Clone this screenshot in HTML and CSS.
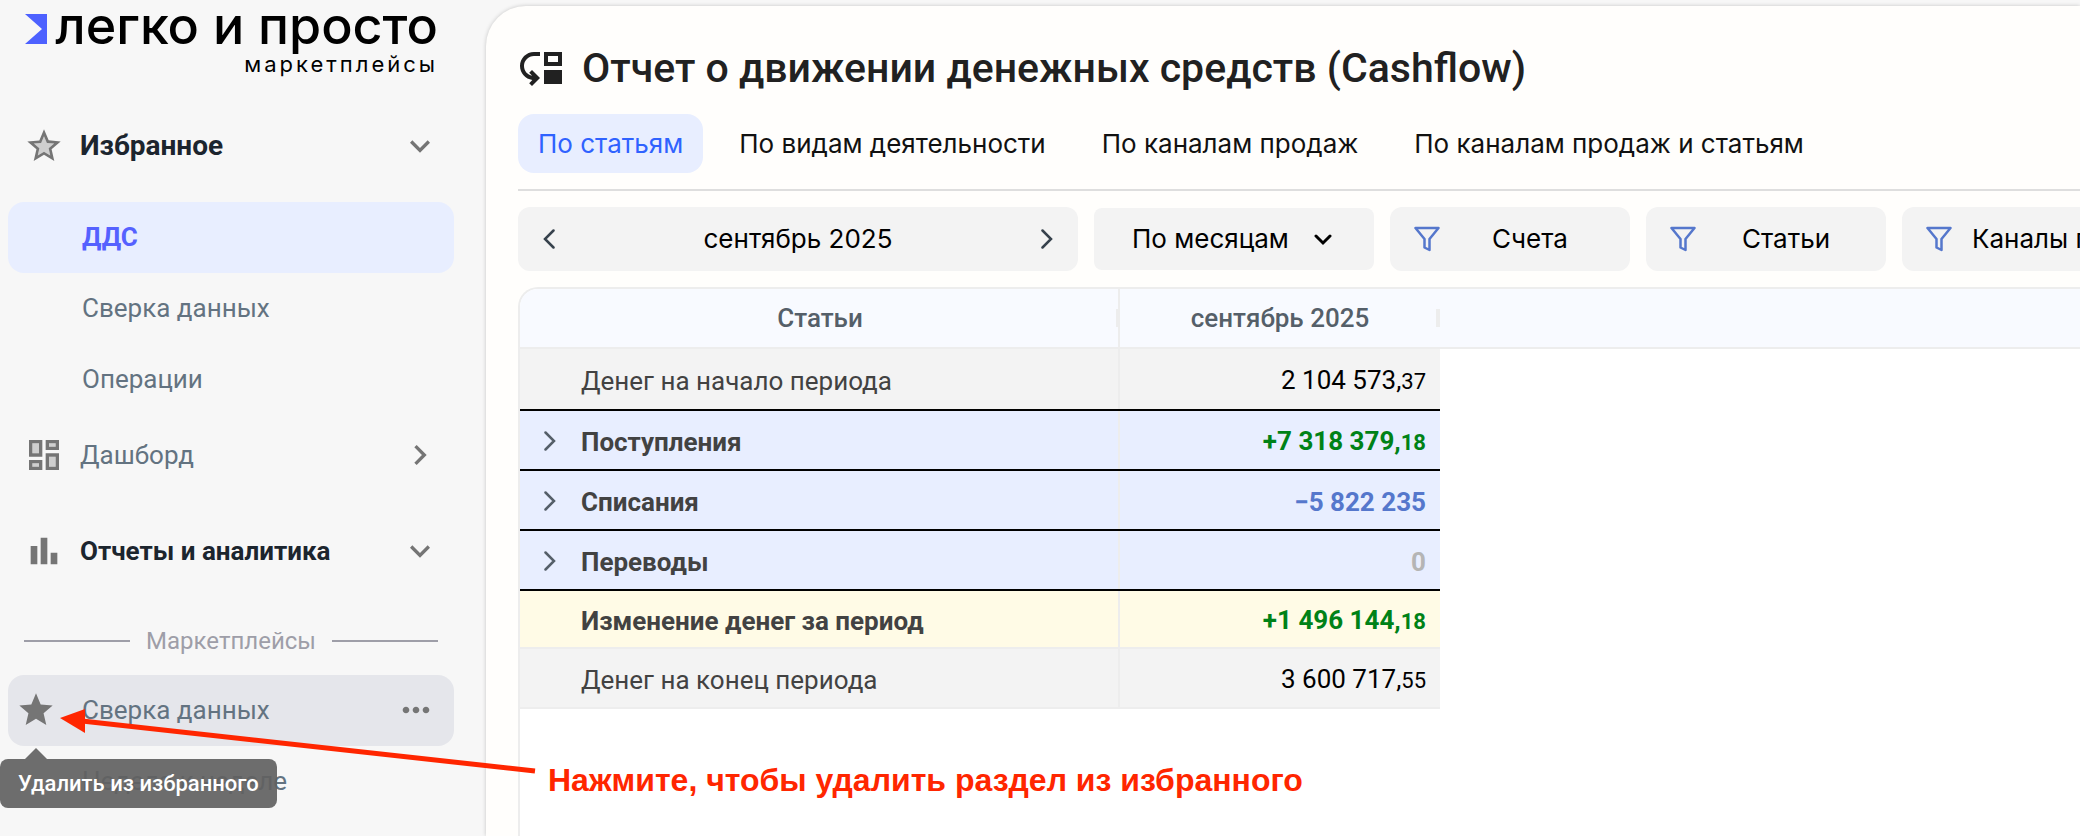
FILE: index.html
```html
<!DOCTYPE html>
<html lang="ru">
<head>
    <meta charset="UTF-8">
    <meta name="viewport" content="width=device-width, initial-scale=1.0">
    <title>Отчет о движении денежных средств (Cashflow)</title>
    <link rel="stylesheet" href="styles.css">
</head>
<body>
    <!-- иконки -->
    <svg class="sprite" aria-hidden="true">
        <symbol id="i-down" viewBox="0 0 24 24"><path d="M16.59 8.59 12 13.17 7.41 8.59 6 10l6 6 6-6z"/></symbol>
        <symbol id="i-right" viewBox="0 0 24 24"><path d="M10 6 8.59 7.41 13.17 12l-4.58 4.59L10 18l6-6z"/></symbol>
        <symbol id="i-star" viewBox="0 0 24 24"><path d="M12 17.27 18.18 21l-1.64-7.03L22 9.24l-7.19-.61L12 2 9.19 8.63 2 9.24l5.46 4.73L5.82 21z"/></symbol>
        <symbol id="i-thin" viewBox="0 0 12 20"><path d="M1.500 1.500l8.500 8.500-8.500 8.500" fill="none" stroke="currentColor" stroke-width="2.500" stroke-linecap="round"/></symbol>
        <symbol id="i-filter" viewBox="0 0 26 26"><path d="M1.500 2h23l-9 11v11l-5-2.500V13z" fill="none" stroke="currentColor" stroke-width="2.500" stroke-linejoin="round"/></symbol>
    </svg>

    <div class="layout">
        <aside class="sidebar">
            <a href="#" class="logo">
                <span class="logo-main">
                    <svg class="logo-mark" viewBox="0 0 22 30"><path d="M0 0h22v30H0l17-15z"/></svg>
                    <span class="logo-name">легко и просто</span>
                </span>
                <span class="logo-sub">маркетплейсы</span>
            </a>

            <nav class="nav">
                <button class="nav-group open favorites">
                    <svg class="icon" viewBox="0 0 24 24"><path opacity=".3" d="m12 15.400-3.760 2.270 1-4.280-3.320-2.880 4.380-.380L12 6.100l1.710 4.040 4.380.380-3.320 2.880 1 4.280z"/><path d="m22 9.240-7.190-.62L12 2 9.190 8.630 2 9.240l5.460 4.730L5.820 21 12 17.270 18.180 21l-1.630-7.030L22 9.240zM12 15.400l-3.760 2.270 1-4.280-3.320-2.880 4.380-.38L12 6.100l1.710 4.040 4.380.38-3.320 2.880 1 4.280L12 15.400z"/></svg>
                    <span>Избранное</span>
                    <svg class="icon"><use href="#i-down"/></svg>
                </button>
                <a href="#" class="nav-item active">ДДС</a>
                <a href="#" class="nav-item">Сверка данных</a>
                <a href="#" class="nav-item">Операции</a>

                <button class="nav-group">
                    <svg class="icon" viewBox="0 0 24 24"><path opacity=".3" d="M5 5h4v6H5zm10 8h4v6h-4zM5 17h4v2H5zM15 5h4v2h-4z"/><path d="M3 13h8V3H3v10zm2-8h4v6H5V5zm8 16h8V11h-8v10zm2-8h4v6h-4v-6zM13 3v6h8V3h-8zm6 4h-4V5h4v2zM3 21h8v-6H3v6zm2-4h4v2H5v-2z"/></svg>
                    <span>Дашборд</span>
                    <svg class="icon"><use href="#i-right"/></svg>
                </button>
                <button class="nav-group open">
                    <svg class="icon" viewBox="0 0 24 24"><path d="M4 9h4v11H4zm12 4h4v7h-4zm-6-9h4v16h-4z"/></svg>
                    <span>Отчеты и аналитика</span>
                    <svg class="icon"><use href="#i-down"/></svg>
                </button>

                <div class="nav-divider">Маркетплейсы</div>
                <div class="nav-item hover">
                    <button class="fav" aria-label="Удалить из избранного" aria-describedby="fav-tip">
                        <svg class="icon"><use href="#i-star"/></svg>
                    </button>
                    <a href="#">Сверка данных</a>
                    <button class="more" aria-label="Ещё">
                        <svg class="icon" viewBox="0 0 24 24"><path d="M6 10c-1.100 0-2 .9-2 2s.9 2 2 2 2-.9 2-2-.9-2-2-2zm12 0c-1.100 0-2 .9-2 2s.9 2 2 2 2-.9 2-2-.9-2-2-2zm-6 0c-1.100 0-2 .9-2 2s.9 2 2 2 2-.9 2-2-.9-2-2-2z"/></svg>
                    </button>
                    <span class="tooltip" id="fav-tip" role="tooltip">Удалить из избранного</span>
                    <!-- подсказка со стрелкой -->
                    <div class="hint">
                        <svg class="hint-arrow" viewBox="0 0 480 70"><path d="M22 12 475 62" stroke="#ff2600" stroke-width="5"/><path d="M0 9 25 0v24z" fill="#ff2600"/></svg>
                        <span>Нажмите, чтобы удалить раздел из избранного</span>
                    </div>
                </div>
                <a href="#" class="nav-item">Неделя к неделе</a>
            </nav>
        </aside>

        <main class="main">
            <h1 class="title">
                <svg viewBox="0 0 24 24"><path d="M3 11c0 2.450 1.760 4.470 4.080 4.910l-1.490-1.490L7 13l4 4.010L7 21l-1.410-1.410 1.580-1.580v-.06C3.700 17.540 1 14.580 1 11c0-3.870 3.130-7 7-7h3v2H8c-2.760 0-5 2.240-5 5zM22 11V4h-9v7h9zm-2-2h-5V6h5v3zM13 13h9v7h-9z"/></svg>
                Отчет о движении денежных средств (Cashflow)
            </h1>

            <div class="tabs">
                <button class="tab active">По статьям</button>
                <button class="tab">По видам деятельности</button>
                <button class="tab">По каналам продаж</button>
                <button class="tab">По каналам продаж и статьям</button>
            </div>

            <div class="filters">
                <div class="period">
                    <button aria-label="Назад"><svg class="thin back"><use href="#i-thin"/></svg></button>
                    <span>сентябрь 2025</span>
                    <button aria-label="Вперёд"><svg class="thin"><use href="#i-thin"/></svg></button>
                </div>
                <div class="step">
                    <select aria-label="Группировка">
                        <option>По месяцам</option>
                        <option>По дням</option>
                    </select>
                    <svg viewBox="0 0 18 12"><path d="M2 2l7 7 7-7" fill="none" stroke="currentColor" stroke-width="3" stroke-linecap="round"/></svg>
                </div>
                <button class="filter"><svg><use href="#i-filter"/></svg><span>Счета</span></button>
                <button class="filter"><svg><use href="#i-filter"/></svg><span>Статьи</span></button>
                <button class="filter"><svg><use href="#i-filter"/></svg><span>Каналы продаж</span></button>
            </div>

            <div class="report">
                <table>
                    <thead>
                        <tr><th class="col-name">Статьи</th><th class="col-sum">сентябрь 2025</th><td></td></tr>
                    </thead>
                    <tbody>
                        <tr class="balance first"><td>Денег на начало периода</td><td>2 104 573,<small>37</small></td><td></td></tr>
                        <tr class="section"><td><button aria-label="Развернуть"><svg class="thin"><use href="#i-thin"/></svg></button>Поступления</td><td class="plus">+7 318 379,<small>18</small></td><td></td></tr>
                        <tr class="section"><td><button aria-label="Развернуть"><svg class="thin"><use href="#i-thin"/></svg></button>Списания</td><td class="minus">−5 822 235</td><td></td></tr>
                        <tr class="section"><td><button aria-label="Развернуть"><svg class="thin"><use href="#i-thin"/></svg></button>Переводы</td><td class="zero">0</td><td></td></tr>
                        <tr class="change"><td>Изменение денег за период</td><td class="plus">+1 496 144,<small>18</small></td><td></td></tr>
                        <tr class="balance"><td>Денег на конец периода</td><td>3 600 717,<small>55</small></td><td></td></tr>
                    </tbody>
                </table>
            </div>
        </main>
    </div>
</body>
</html>
```
FILE: styles.css
```css
* {
    box-sizing: border-box;
}
body {
    margin: 0;
    background: #f7f7f7;
    font-family: Roboto, Arial, sans-serif;
    font-size: 26px;
    line-height: 32px;
    color: #000;
    overflow: hidden;
}
button {
    font: inherit;
    color: inherit;
    background: none;
    border: none;
    padding: 0;
    cursor: pointer;
}
a {
    color: inherit;
    text-decoration: none;
}
svg {
    display: block;
    flex-shrink: 0;
    fill: currentColor;
}
.sprite {
    display: none;
}
.layout {
    display: flex;
    height: 100vh;
}

/* меню слева */
.sidebar {
    position: relative;
    z-index: 1;
    width: 486px;
    flex-shrink: 0;
    padding: 0 32px 0 8px;
}
.logo {
    display: flex;
    flex-direction: column;
    align-items: flex-end;
    height: 106px;
    padding-right: 16px;
    font-family: Inter, sans-serif;
}
.logo-main {
    display: flex;
    align-items: center;
    gap: 8px;
    height: 52px;
    white-space: nowrap;
}
.logo-mark {
    width: 22px;
    height: 30px;
    margin-top: 6px;
    fill: #4d61ff;
}
.logo-name {
    font-size: 52px;
    line-height: 52px;
    font-weight: 500;
}
.logo-sub {
    font-size: 22px;
    line-height: 24px;
    letter-spacing: 3px;
}
.icon {
    width: 40px;
    height: 40px;
    color: #757575;
}
.nav-group {
    display: flex;
    align-items: center;
    gap: 16px;
    width: 100%;
    height: 80px;
    padding: 0 14px 0 16px;
    color: #637381;
    text-align: left;
}
.nav-group span {
    flex: 1;
}
.nav-group.open {
    margin-bottom: 16px;
    font-weight: 700;
    color: #1c252e;
}
.nav-group.favorites {
    font-size: 28px;
}
.nav-item + .nav-group + .nav-group {
    margin-top: 16px;
}
.nav-item {
    position: relative;
    display: flex;
    align-items: center;
    height: 71px;
    padding: 0 18px 2px 74px;
    border-radius: 16px;
    color: #637381;
}
.nav-item.active {
    background: #e8eeff;
    color: #5561ff;
    font-weight: 700;
}
.nav-item.hover {
    z-index: 1;
    padding-left: 8px;
    background: #e5e6eb;
}
.nav-item .fav {
    margin-right: 26px;
}
.nav-item .more {
    margin-left: auto;
}
.nav-divider {
    display: flex;
    align-items: center;
    gap: 16px;
    height: 68px;
    padding: 0 16px;
    font-size: 24px;
    color: #9e9ea8;
}
.nav-divider::before,
.nav-divider::after {
    content: "";
    flex: 1;
    height: 2px;
    background: #9e9ea8;
}
.tooltip {
    position: absolute;
    left: -8px;
    top: 84px;
    padding: 10px 18px;
    border-radius: 8px;
    background: rgba(97, 97, 97, 0.92);
    color: #fff;
    font-size: 22px;
    font-weight: 500;
    line-height: 29px;
    white-space: nowrap;
}
.tooltip::before {
    content: "";
    position: absolute;
    left: 25px;
    bottom: 100%;
    border: 11px solid transparent;
    border-top: 0;
    border-bottom-color: rgba(97, 97, 97, 0.92);
}
.hint {
    position: absolute;
    left: 52px;
    top: 34px;
    display: flex;
    align-items: flex-end;
    gap: 8px;
    color: #ff2600;
    font: bold 32px/36px "Liberation Sans", Arial, sans-serif;
    white-space: nowrap;
    pointer-events: none;
}
.hint span {
    margin-bottom: -19px;
}
.hint-arrow {
    width: 480px;
    height: 70px;
}

/* отчет */
.main {
    flex: 1;
    min-width: 0;
    display: flex;
    flex-direction: column;
    margin-top: 6px;
    padding: 38px 0 0 32px;
    border-radius: 40px 0 0 0;
    background: #fffefc;
    box-shadow: 0 0 4px rgba(0, 0, 0, 0.2);
    overflow: hidden;
}
.title {
    display: flex;
    align-items: center;
    gap: 16px;
    margin: 0 0 22px;
    font-size: 41px;
    line-height: 48px;
    font-weight: 500;
    color: #212121;
    white-space: nowrap;
}
.title svg {
    width: 48px;
    height: 48px;
}
.tabs {
    display: flex;
    gap: 16px;
    padding-bottom: 16px;
    border-bottom: 2px solid #dedede;
}
.tab {
    height: 59px;
    padding: 0 20px;
    border-radius: 16px;
    font-family: Inter, sans-serif;
    white-space: nowrap;
    color: #111;
}
.tab.active {
    background: #e8eeff;
    color: #2f62ff;
}
.filters {
    display: flex;
    align-items: center;
    gap: 16px;
    padding: 16px 0;
    font-family: Inter, sans-serif;
}
.period {
    display: flex;
    align-items: center;
    justify-content: space-between;
    flex-shrink: 0;
    width: 560px;
    height: 64px;
    padding: 0 25px;
    border-radius: 12px;
    background: #f3f3f3;
}
.thin {
    width: 12px;
    height: 20px;
    color: #37424d;
}
.thin.back {
    transform: rotate(180deg);
}
.step {
    position: relative;
    flex-shrink: 0;
}
.step select {
    width: 280px;
    height: 62px;
    padding: 0 38px;
    border: none;
    border-radius: 8px;
    background: #f3f3f3;
    appearance: none;
    font: inherit;
    color: inherit;
}
.step svg {
    position: absolute;
    right: 42px;
    top: 26px;
    width: 18px;
    height: 12px;
    pointer-events: none;
}
.filter {
    display: flex;
    align-items: center;
    gap: 20px;
    flex-shrink: 0;
    min-width: 240px;
    height: 64px;
    padding: 0 30px 0 24px;
    border-radius: 12px;
    background: #f3f3f3;
    white-space: nowrap;
}
.filter svg {
    width: 26px;
    height: 26px;
    color: #5577cc;
}
.filter span {
    flex: 1;
}
.report {
    flex: 1;
    border: 2px solid #ededed;
    border-width: 2px 0 0 2px;
    border-radius: 20px 0 0 0;
    background: #fff;
    overflow: hidden;
}
table {
    width: 100%;
    table-layout: fixed;
    border-spacing: 0;
}
th,
td {
    height: 60px;
    padding: 0;
    border-bottom: 2px solid #ededed;
}
th {
    position: relative;
    font-weight: 500;
    color: #555f69;
}
thead tr {
    background: #f8faff;
}
.col-name {
    width: 600px;
}
.col-sum {
    width: 320px;
}
th::after {
    content: "";
    position: absolute;
    right: 0;
    top: 20px;
    width: 4px;
    height: 18px;
    background: #ededed;
}
tr > :first-child {
    box-shadow: inset -2px 0 #ededed;
}
tbody td {
    padding-top: 3px;
}
tbody td:first-child {
    padding-left: 61px;
    color: #424242;
}
tbody td:nth-child(2) {
    padding-right: 14px;
    text-align: right;
}
tbody td:last-child {
    border: none;
    background: #fff;
}
small {
    font-size: 22px;
}
.balance {
    background: #f3f3f3;
}
.balance.first td {
    height: 62px;
}
.balance.first td,
.section td {
    border-bottom-color: #000;
}
.section {
    background: #e8eeff;
    font-weight: 700;
}
.section td:first-child {
    padding-left: 24px;
}
.section button {
    width: 12px;
    margin-right: 25px;
}
.section .thin {
    color: #555f69;
}
.change {
    background: #fffbe6;
    font-weight: 700;
}
.change td {
    height: 58px;
}
.plus {
    color: #008217;
}
.minus {
    color: #5577cc;
}
.zero {
    color: #b5b5b5;
}
```
